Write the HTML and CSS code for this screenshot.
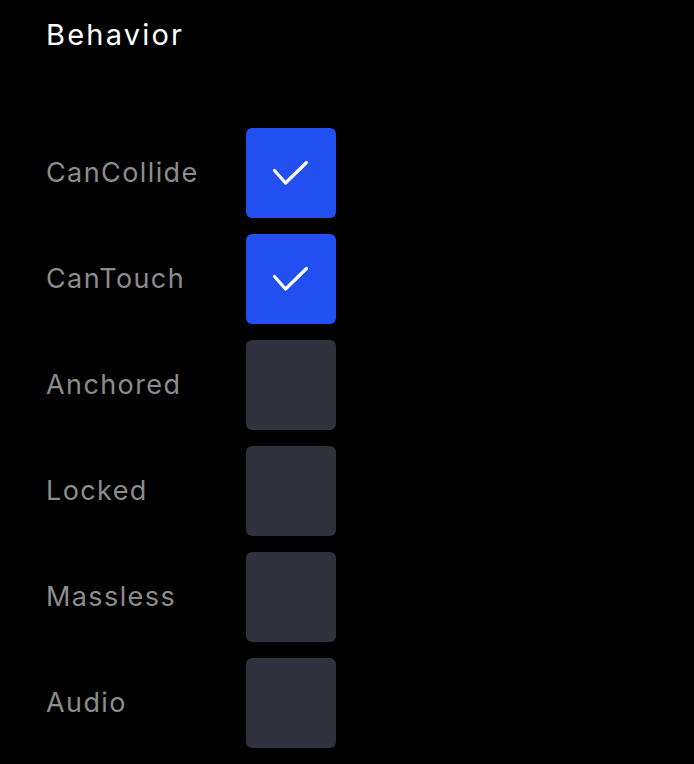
FILE: index.html
```html
<!DOCTYPE html>
<html>
<head>
<meta charset="utf-8">
<link rel="stylesheet" href="styles.css">
</head>
<body>
<div class="panel">
  <h2 class="title">Behavior</h2>
  <div class="list">
    <div class="row"><span class="label">CanCollide</span><span class="box on"><svg viewBox="0 0 90 90" width="90" height="90"><path d="M28.5 42.5 L39.5 55 L60.5 34.5" fill="none" stroke="#fff" stroke-width="3.2" stroke-linecap="round" stroke-linejoin="round"/></svg></span></div>
    <div class="row"><span class="label">CanTouch</span><span class="box on"><svg viewBox="0 0 90 90" width="90" height="90"><path d="M28.5 42.5 L39.5 55 L60.5 34.5" fill="none" stroke="#fff" stroke-width="3.2" stroke-linecap="round" stroke-linejoin="round"/></svg></span></div>
    <div class="row"><span class="label">Anchored</span><span class="box"></span></div>
    <div class="row"><span class="label">Locked</span><span class="box"></span></div>
    <div class="row"><span class="label">Massless</span><span class="box"></span></div>
    <div class="row"><span class="label">Audio</span><span class="box"></span></div>
  </div>
</div>
</body>
</html>
```
FILE: styles.css
```css
html, body {
  margin: 0;
  background: #000;
}
body {
  font-family: Inter, "Noto Sans", sans-serif;
}
.panel {
  padding: 14px 0 0 46px;
}
.title {
  margin: 0;
  height: 42px;
  line-height: 42px;
  font-size: 29px;
  font-weight: 400;
  letter-spacing: 2.2px;
  color: #fff;
}
.list {
  display: flex;
  flex-direction: column;
  gap: 16px;
  margin-top: 72px;
}
.row {
  display: flex;
  align-items: center;
}
.label {
  width: 200px;
  font-size: 27px;
  letter-spacing: 1.4px;
  margin-top: -2px;
  color: #8c8c8c;
}
.box {
  width: 90px;
  height: 90px;
  border-radius: 6px;
  background: #2f323c;
  display: block;
}
.box.on {
  background: #224ff0;
}
.box svg {
  display: block;
}
```
